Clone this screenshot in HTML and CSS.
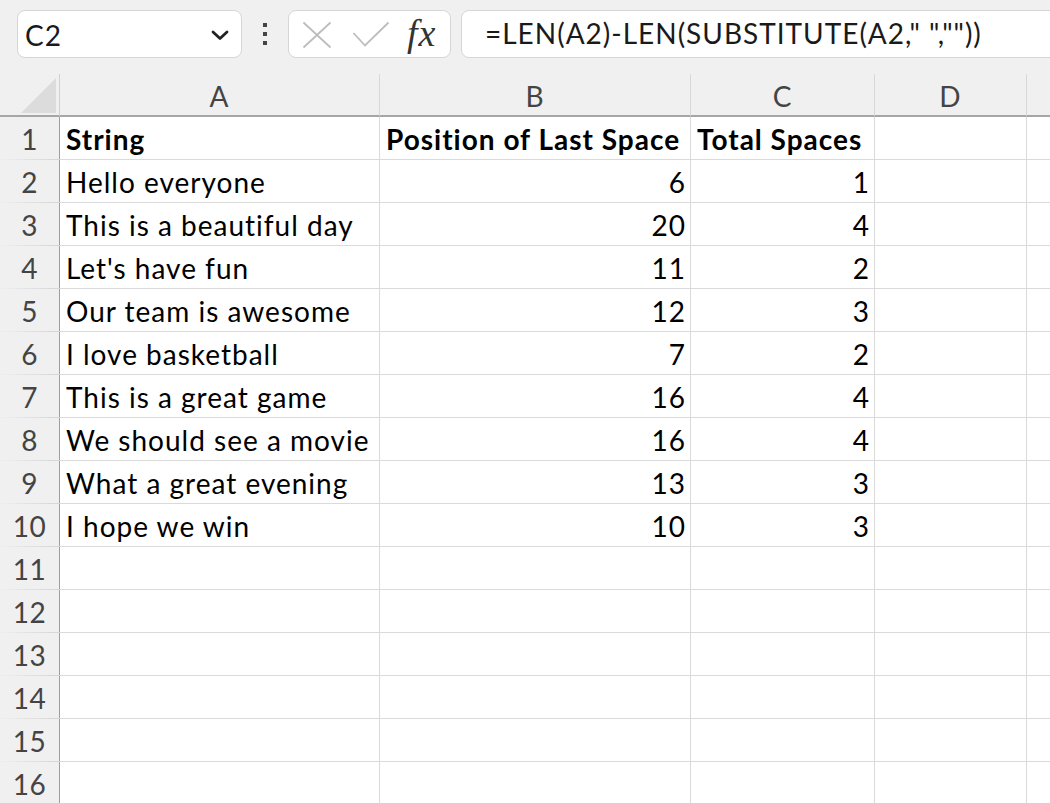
FILE: index.html
```html
<!DOCTYPE html>
<html lang="en">
<head>
<meta charset="utf-8">
<title>Excel - Count spaces</title>
<link rel="stylesheet" href="styles.css">
</head>
<body>
<div class="app">
  <div class="toolbar">
    <div class="namebox">
      <span class="name">C2</span>
      <svg class="chev" width="18" height="12" viewBox="0 0 18 12"><path d="M2 3 L9 9.5 L16 3" fill="none" stroke="#222" stroke-width="2.8" stroke-linecap="round" stroke-linejoin="round"/></svg>
    </div>
    <div class="dots"><span></span><span></span><span></span></div>
    <div class="fxbox">
      <svg class="ico" width="30" height="28" viewBox="0 0 30 28"><path d="M1.5 1.5 L28.5 26.5 M28.5 1.5 L1.5 26.5" stroke="#bdbdbd" stroke-width="1.8" fill="none"/></svg>
      <svg class="ico check" width="38" height="28" viewBox="0 0 38 28"><path d="M1.5 12 L13 24.5 L36.5 1.5" stroke="#bdbdbd" stroke-width="1.8" fill="none"/></svg>
      <span class="fx">fx</span>
    </div>
    <div class="formula">=LEN(A2)-LEN(SUBSTITUTE(A2," ",""))</div>
  </div>
  <div class="grid">
    <div class="corner"><span class="tri"></span></div>
    <div class="colh">A</div>
    <div class="colh">B</div>
    <div class="colh">C</div>
    <div class="colh">D</div>
    <div class="colh last"></div>

    <div class="rowh">1</div><div class="cell b">String</div><div class="cell b">Position of Last Space</div><div class="cell b">Total Spaces</div><div class="cell"></div><div class="cell"></div>
    <div class="rowh">2</div><div class="cell">Hello everyone</div><div class="cell num">6</div><div class="cell num">1</div><div class="cell"></div><div class="cell"></div>
    <div class="rowh">3</div><div class="cell">This is a beautiful day</div><div class="cell num">20</div><div class="cell num">4</div><div class="cell"></div><div class="cell"></div>
    <div class="rowh">4</div><div class="cell">Let's have fun</div><div class="cell num">11</div><div class="cell num">2</div><div class="cell"></div><div class="cell"></div>
    <div class="rowh">5</div><div class="cell">Our team is awesome</div><div class="cell num">12</div><div class="cell num">3</div><div class="cell"></div><div class="cell"></div>
    <div class="rowh">6</div><div class="cell">I love basketball</div><div class="cell num">7</div><div class="cell num">2</div><div class="cell"></div><div class="cell"></div>
    <div class="rowh">7</div><div class="cell">This is a great game</div><div class="cell num">16</div><div class="cell num">4</div><div class="cell"></div><div class="cell"></div>
    <div class="rowh">8</div><div class="cell">We should see a movie</div><div class="cell num">16</div><div class="cell num">4</div><div class="cell"></div><div class="cell"></div>
    <div class="rowh">9</div><div class="cell">What a great evening</div><div class="cell num">13</div><div class="cell num">3</div><div class="cell"></div><div class="cell"></div>
    <div class="rowh">10</div><div class="cell">I hope we win</div><div class="cell num">10</div><div class="cell num">3</div><div class="cell"></div><div class="cell"></div>
    <div class="rowh">11</div><div class="cell"></div><div class="cell"></div><div class="cell"></div><div class="cell"></div><div class="cell"></div>
    <div class="rowh">12</div><div class="cell"></div><div class="cell"></div><div class="cell"></div><div class="cell"></div><div class="cell"></div>
    <div class="rowh">13</div><div class="cell"></div><div class="cell"></div><div class="cell"></div><div class="cell"></div><div class="cell"></div>
    <div class="rowh">14</div><div class="cell"></div><div class="cell"></div><div class="cell"></div><div class="cell"></div><div class="cell"></div>
    <div class="rowh">15</div><div class="cell"></div><div class="cell"></div><div class="cell"></div><div class="cell"></div><div class="cell"></div>
    <div class="rowh">16</div><div class="cell"></div><div class="cell"></div><div class="cell"></div><div class="cell"></div><div class="cell"></div>
  </div>
</div>
</body>
</html>
```

FILE: styles.css
```css
* { box-sizing: border-box; }
html, body {
  margin: 0;
  padding: 0;
  background: #f0f0f0;
  overflow: hidden;
}
.app {
  width: 1050px;
  height: 803px;
  overflow: hidden;
  font-family: Lato, "Open Sans", sans-serif;
  font-size: 28px;
  color: #000;
}
.toolbar {
  height: 74px;
  display: flex;
  align-items: flex-start;
  padding: 10px 0 0 17px;
}
.toolbar > * { flex: none; }
.namebox {
  width: 225px;
  height: 48px;
  background: #fff;
  border: 1px solid #d6d6d6;
  border-radius: 8px;
  display: flex;
  align-items: center;
  justify-content: space-between;
  padding: 0 12px 0 7px;
}
.name { color: #1a1a1a; line-height: 1; padding-top: 1px; letter-spacing: 1px; }
.chev { margin-top: 2px; }
.dots {
  width: 46px;
  height: 48px;
  display: flex;
  flex-direction: column;
  align-items: center;
  justify-content: center;
  gap: 4.5px;
}
.dots span {
  width: 4.5px;
  height: 4.5px;
  background: #444;
  display: block;
}
.fxbox {
  width: 163px;
  height: 48px;
  background: #fff;
  border: 1px solid #d6d6d6;
  border-radius: 8px;
  display: flex;
  align-items: center;
  padding: 0 0 0 13px;
}
.ico { display: block; margin-top: 1px; }
.check { margin-left: 20px; }
.fx {
  font-family: "Liberation Serif", "DejaVu Serif", serif;
  font-style: italic;
  font-size: 38px;
  color: #333;
  margin-left: 17px;
  line-height: 1;
  margin-top: -3px;
  letter-spacing: 1px;
}
.formula {
  margin-left: 10px;
  width: 640px;
  height: 48px;
  background: #fff;
  border: 1px solid #d6d6d6;
  border-radius: 8px;
  padding: 0 0 0 23px;
  line-height: 44px;
  color: #1a1a1a;
  white-space: nowrap;
  letter-spacing: 1px;
}
.grid {
  display: grid;
  grid-template-columns: 60px 320px 311px 184px 152px 120px;
  grid-auto-rows: 43px;
  letter-spacing: 1px;
}
.corner {
  background: #f0f0f0;
  border-right: 1px solid #d0d0d0;
  border-bottom: 2px solid #a6a6a6;
  position: relative;
}
.tri {
  position: absolute;
  left: 21px;
  top: 4px;
  width: 0;
  height: 0;
  border-style: solid;
  border-width: 0 0 35px 35px;
  border-color: transparent transparent #dcdcdc transparent;
}
.colh {
  background: #f0f0f0;
  border-right: 1px solid #d8d8d8;
  border-bottom: 2px solid #a6a6a6;
  color: #444;
  text-align: center;
  padding-top: 2px;
  line-height: 40px;
}
.rowh {
  background: #f0f0f0;
  border-bottom: 1px solid;
  border-image: linear-gradient(to right, #efefef, #d4d4d4) 1;
  box-shadow: inset -1px 0 0 #9e9e9e;
  color: #444;
  text-align: center;
  padding-top: 2px;
  padding-right: 1px;
  line-height: 40px;
  letter-spacing: 0.5px;
}
.cell {
  background: #fff;
  border-right: 1px solid #dadada;
  border-bottom: 1px solid #dadada;
  padding: 2px 5px 0 6px;
  line-height: 40px;
  white-space: nowrap;
}
.num { padding-right: 4px; }
.b { font-weight: 700; }
.num { text-align: right; }
```
